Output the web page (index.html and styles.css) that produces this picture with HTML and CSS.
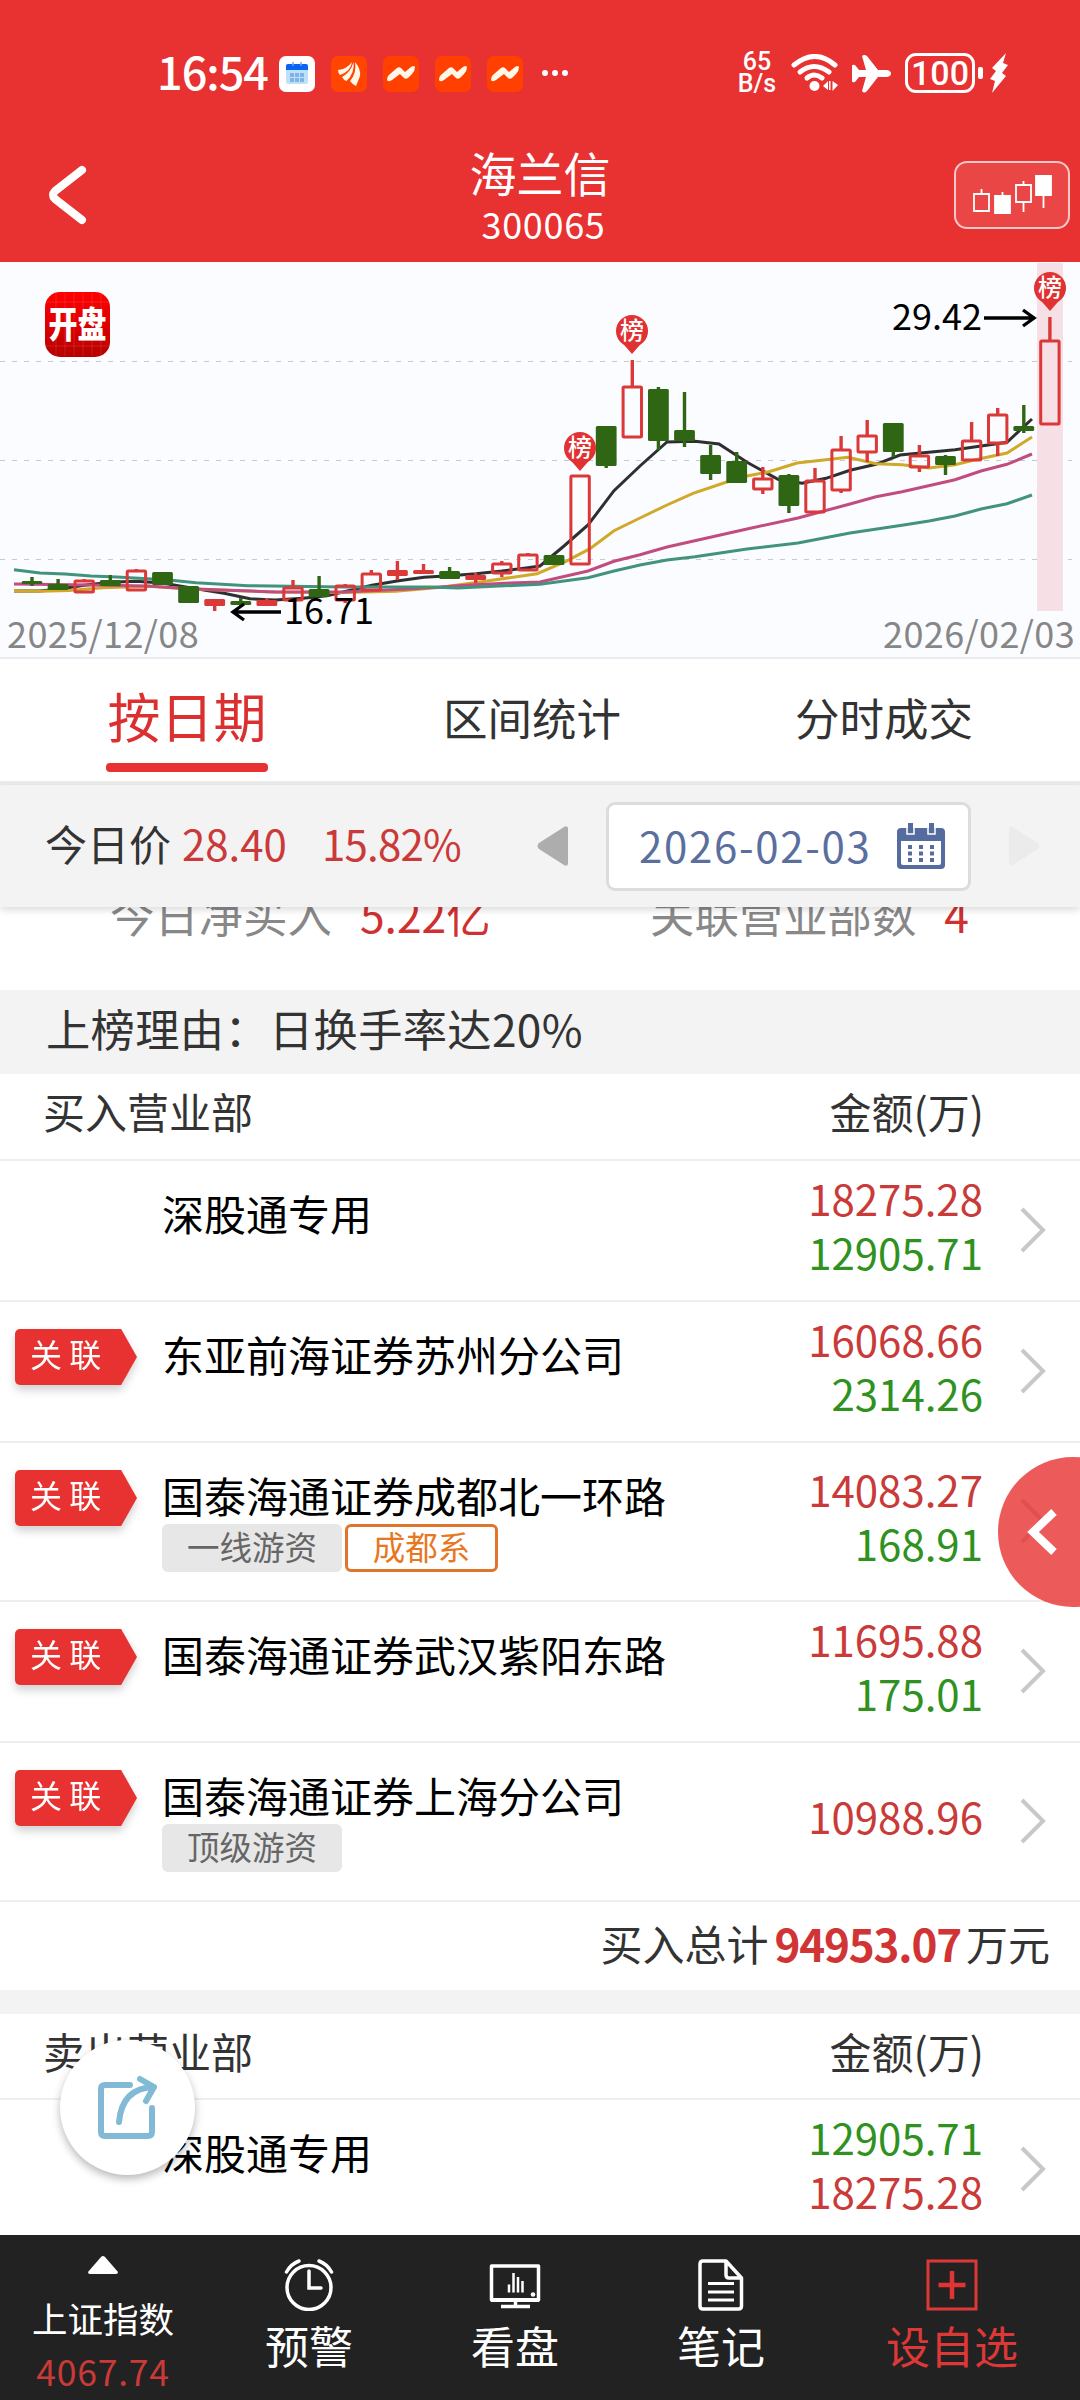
FILE: index.html
```html
<!DOCTYPE html>
<html lang="zh-CN">
<head>
<meta charset="UTF-8">
<meta name="viewport" content="width=device-width,initial-scale=1.0">
<title>海兰信 300065</title>
<link rel="stylesheet" href="styles.css">
</head>

<body>
<div class="page">

<!-- ====== 状态栏 ====== -->
<div class="status">
  <span class="time">16:54</span>
  <div class="apps">
    <svg viewBox="0 0 36 36"><rect width="36" height="36" rx="7" fill="#fff"/><rect x="7" y="8" width="22" height="20" rx="2" fill="#bfe0fb"/><path d="M7 14v-4q0-2 2-2h18q2 0 2 2v4z" fill="#0a62f0"/><path d="M14 6v4M22 6v4" stroke="#6aa5f5" stroke-width="1.5"/><path d="M11 17h4v4h-4zM16 17h4v4h-4zM21 17h4v4h-4zM11 22h4v4h-4zM16 22h4v4h-4zM21 22h4v4h-4z" fill="#7fb2e6"/></svg>
    <svg viewBox="0 0 36 36"><rect width="36" height="36" rx="7" fill="#ff4500"/><g fill="#fff8e8"><path d="M7 14q9-1 14-8-1 9-12 13-2-2-2-5z"/><path d="M11 21q9-5 11.500-15 1.500 11-7 19-3-1-4.500-4z"/><path d="M24 6q6 7 5 14l-4 10q-4-2-6-5 7-8 5-19z"/></g></svg>
    <svg viewBox="0 0 36 36"><rect width="36" height="36" rx="7" fill="#ff4000"/><path d="M4 23q0-3 3-5l7-6q3-2 5 1l3 3 6-5q3-2 4 0 0 4-3 7l-4 4q-3 2-5-1l-3-3-8 6q-5 3-5-1z" fill="#fff8e8"/></svg>
    <svg viewBox="0 0 36 36"><rect width="36" height="36" rx="7" fill="#ff4000"/><path d="M4 23q0-3 3-5l7-6q3-2 5 1l3 3 6-5q3-2 4 0 0 4-3 7l-4 4q-3 2-5-1l-3-3-8 6q-5 3-5-1z" fill="#fff8e8"/></svg>
    <svg viewBox="0 0 36 36"><rect width="36" height="36" rx="7" fill="#ff4000"/><path d="M4 23q0-3 3-5l7-6q3-2 5 1l3 3 6-5q3-2 4 0 0 4-3 7l-4 4q-3 2-5-1l-3-3-8 6q-5 3-5-1z" fill="#fff8e8"/></svg>
  </div>
  <svg class="dots" viewBox="0 0 28 8"><circle cx="4" cy="4" r="3"/><circle cx="14" cy="4" r="3"/><circle cx="24" cy="4" r="3"/></svg>
  <div class="speed"><span>65</span><span>B/s</span></div>
  <svg class="wifi" viewBox="0 0 48 38"><g fill="none" stroke="#fff" stroke-width="5" stroke-linecap="round"><path d="M3 11q21-17 41 0"/><path d="M9 18q14-11 29 0"/><path d="M16 24q7-6 15 0"/></g><circle cx="23.500" cy="32" r="5"/><path d="M32 32l5-5v9zM38 27h1.500v9H38zM41.500 27l5.500 4-5.500 6z"/></svg>
  <svg class="plane" viewBox="0 0 39 39"><path d="M10 2q2-2 5 0l11 14h9q4 1 4 3.500t-4 3.500h-9L15 37q-3 3-5 0l4-14H7l-4 5q-3 1-3-1V12q0-2 3-1l4 5h7z"/></svg>
  <div class="battery">100</div>
  <i class="nub"></i>
  <svg class="bolt" viewBox="0 0 18 40"><path d="M16 0L2 15l4 3-6 8 5 2-3 12 14-17-4-3 6-8-5-2z"/></svg>
</div>

<!-- ====== 标题栏 ====== -->
<header class="titlebar">
  <svg class="back" viewBox="0 0 40 60"><path d="M35 5L8 26q-4 4 0 8l27 21" fill="none" stroke="#fff" stroke-width="8" stroke-linecap="round"/></svg>
  <div class="stock"><h1>海兰信</h1><p>300065</p></div>
  <button class="kbtn">
    <svg viewBox="0 0 116 68"><g fill="none" stroke="#fff" stroke-width="1.800"><path d="M20 33h15v17H20zM27.500 28v5M41 35h15v17H41zM48.500 31v4M62 24h15v17H62zM69.500 20v4M69.500 41v10M82 15h15v19H82zM89.500 34v13"/></g><path d="M41 35h15v17H41zM82 15h15v19H82z" fill="#fff"/></svg>
  </button>
</header>

<!-- ====== K线 ====== -->
<section class="chart">
  <svg id="kline" viewBox="0 0 1080 397">
    <defs>
      <linearGradient id="logo" x1="0" y1="0" x2="0" y2="1"><stop offset="0" stop-color="#ff0000"/><stop offset=".4" stop-color="#e60000"/><stop offset="1" stop-color="#b50000"/></linearGradient>
      <g id="pin"><path d="M-14 7L0 23 14 7z" fill="#e03232"/><circle r="16" fill="#e03232"/></g>
    </defs>
    <path class="grid" d="M0 99.500H1072M0 198.500H1072M0 297.500H1072"/>
    <rect x="1037" y="1" width="26" height="348" fill="#f6dfe5"/>
    <rect x="45" y="30" width="65" height="65" rx="15" fill="url(#logo)"/>
    <path d="M56 31v63M65 31v63M74 31v63M83 31v63M92 31v63M101 31v63M46 40h63M46 84h63" stroke="#fff" stroke-opacity=".12"/>
    <text class="logo-text" transform="translate(77.500 75.500) scale(1 1.250)">开盘</text>
    <g id="ma"></g>
    <g id="candles"></g>
    <g id="pins"></g>
    <text class="price" x="284" y="362">16.71</text>
    <path class="arrow" d="M281 350H234M244 342L233 350l11 8"/>
    <text class="price" x="892" y="68">29.42</text>
    <path class="arrow" d="M984 56h48M1023 48l11 8-11 8"/>
    <text class="date" x="7" y="386">2025/12/08</text>
    <text class="date" x="883" y="386">2026/02/03</text>
  </svg>
</section>

<nav class="tabs">
  <a class="tab active">按日期</a>
  <a class="tab">区间统计</a>
  <a class="tab">分时成交</a>
</nav>

<div class="datebar">
  <span class="label">今日价</span>
  <span class="now">28.40</span>
  <span class="pct">15.82%</span>
  <svg class="prev" viewBox="0 0 31 40"><path d="M31 2v36q-1 3-4 1L2 23q-3-3 0-6L27 1q3-2 4 1z"/></svg>
  <div class="datebox">
    <span>2026-02-03</span>
    <svg viewBox="0 0 48 46"><path d="M4 5h40q4 0 4 4v33q0 4-4 4H4q-4 0-4-4V9q0-4 4-4z" fill="#566c9f"/><path d="M4 18h40v22q0 2-2 2H6q-2 0-2-2z" fill="#fff"/><path d="M10 1v10h7V1M31 1v10h7V1" fill="none" stroke="#fff" stroke-width="1.500"/><path d="M13.500 0v10M34.500 0v10" stroke="#566c9f" stroke-width="5"/><path d="M11 24h4M22 24h4M33 24h4M11 30.500h4M22 30.500h4M33 30.500h4M11 37h4M22 37h4M33 37h4" stroke="#566c9f" stroke-width="4"/></svg>
  </div>
  <svg class="next" viewBox="0 0 31 40"><path d="M0 2v36q1 3 4 1l25-16q3-3 0-6L4 1Q1-1 0 2z"/></svg>
</div>

<div class="summary">
  <div class="sum-l">今日净买入<b>5.22亿</b></div>
  <div class="sum-r">关联营业部数<b>4</b></div>
</div>

<div class="reason">上榜理由：日换手率达20%</div>

<!-- ====== 买入 ====== -->
<section class="list">
  <div class="head"><span>买入营业部</span><span>金额(万)</span></div>
  <div class="row">
    <div class="mark"></div>
    <div class="name">深股通专用</div>
    <div class="amt"><span class="up">18275.28</span><span class="down">12905.71</span></div>
    <svg class="go" viewBox="0 0 28 46"><path d="M3 2l21 21L3 44"/></svg>
  </div>
  <div class="row">
    <div class="mark"><span class="badge">关 联</span></div>
    <div class="name">东亚前海证券苏州分公司</div>
    <div class="amt"><span class="up">16068.66</span><span class="down">2314.26</span></div>
    <svg class="go" viewBox="0 0 28 46"><path d="M3 2l21 21L3 44"/></svg>
  </div>
  <div class="row">
    <div class="mark"><span class="badge">关 联</span></div>
    <div class="name">国泰海通证券成都北一环路
      <div class="tags"><span class="tag">一线游资</span><span class="tag orange">成都系</span></div>
    </div>
    <div class="amt"><span class="up">14083.27</span><span class="down">168.91</span></div>
    <svg class="go" viewBox="0 0 28 46"><path d="M3 2l21 21L3 44"/></svg>
  </div>
  <div class="row">
    <div class="mark"><span class="badge">关 联</span></div>
    <div class="name">国泰海通证券武汉紫阳东路</div>
    <div class="amt"><span class="up">11695.88</span><span class="down">175.01</span></div>
    <svg class="go" viewBox="0 0 28 46"><path d="M3 2l21 21L3 44"/></svg>
  </div>
  <div class="row">
    <div class="mark"><span class="badge">关 联</span></div>
    <div class="name">国泰海通证券上海分公司
      <div class="tags"><span class="tag">顶级游资</span></div>
    </div>
    <div class="amt"><span class="up">10988.96</span></div>
    <svg class="go" viewBox="0 0 28 46"><path d="M3 2l21 21L3 44"/></svg>
  </div>
  <div class="total">买入总计<b>94953.07</b>万元</div>
</section>

<!-- ====== 卖出 ====== -->
<section class="list sell">
  <div class="head"><span>卖出营业部</span><span>金额(万)</span></div>
  <div class="row">
    <div class="mark"></div>
    <div class="name">深股通专用</div>
    <div class="amt"><span class="down">12905.71</span><span class="up">18275.28</span></div>
    <svg class="go" viewBox="0 0 28 46"><path d="M3 2l21 21L3 44"/></svg>
  </div>
</section>

<!-- ====== 底部导航 ====== -->
<footer class="bottom">
  <div class="index">
    <svg viewBox="0 0 30 18"><path d="M13 1q2-2 4 0l13 15q0 2-2 2H2q-2 0-2-2z" fill="#fff"/></svg>
    <span>上证指数</span>
    <em>4067.74</em>
  </div>
  <div class="item">
    <svg viewBox="0 0 52 52"><g fill="none" stroke="#fff" stroke-width="3.500"><circle cx="26" cy="28.500" r="22"/><path d="M26 12v17h12" stroke-linecap="round"/><path d="M3.500 13Q8 5 16 2M48.500 13Q44 5 36 2" stroke-linecap="round"/></g></svg>
    <span>预警</span>
  </div>
  <div class="item">
    <svg viewBox="0 0 52 52"><g fill="none" stroke="#fff" stroke-width="3.500"><path d="M2.500 7h47v34h-47zM12 47.500h29M26.500 41v6" stroke-linejoin="round"/><path d="M20 33.500v-8M24.500 33.500V14M29 33.500V18M33.500 33.500V22" stroke-width="2.500"/></g><path d="M2 39h48v4H2z" fill="#fff"/><circle cx="44" cy="35.500" r="2.300" fill="#fff"/></svg>
    <span>看盘</span>
  </div>
  <div class="item">
    <svg viewBox="0 0 52 52"><g fill="none" stroke="#fff" stroke-width="3.500" stroke-linejoin="round"><path d="M8 2h23l15.500 17v28q0 3-3 3H8q-3 0-3-3V5q0-3 3-3zM31 2v14q0 3 3 3h12"/><path d="M13 24.500h26M13 33h26M13 41h26" stroke-width="2.800"/></g></svg>
    <span>笔记</span>
  </div>
  <div class="item add">
    <svg viewBox="0 0 52 52"><path d="M2 2h48v48H2z" fill="none" stroke="#dc3838" stroke-width="3"/><path d="M26 12v28M12.500 26h27" stroke="#e03434" stroke-width="4.500"/></svg>
    <span>设自选</span>
  </div>
</footer>

<!-- 悬浮按钮 -->
<div class="drawer"><svg viewBox="0 0 30 46"><path d="M27 3L6 23l21 20" fill="none" stroke="#fff" stroke-width="8"/></svg></div>
<div class="share"><svg viewBox="0 0 62 66"><g fill="none" stroke="#82b9d5" stroke-width="6" stroke-linecap="round" stroke-linejoin="round"><path d="M33 11H8q-4 0-4 4v43q0 4 4 4h43q4 0 4-4V34"/><path d="M22 48q3-34 35-35M43 5l14 8-8 14"/></g></svg></div>

</div>

<script>
const NS="http://www.w3.org/2000/svg";
function add(parent,tag,attrs){
  const el=document.createElementNS(NS,tag);
  for(const k in attrs) el.setAttribute(k,attrs[k]);
  document.getElementById(parent).appendChild(el);
  return el;
}

/* 均线 */
const lines=[
 ["#2f2f30","14,329 40,329 62,326.700 84,323.300 110,320.300 136,319.300 162,321 196,326.700 224,331.300 250,336.700 275,338 303,336.300 327,333.700 372,323.300 397,319 424,315.300 450,313.700 476,311.700 502,309 528,305.700 540,304 564,284 588,263 614,228.700 640,204 667,180 695,179.300 719,182 747,200.300 778,217.300 802,221.300 826,216.300 850,208.300 876,202.300 900,193 955,187.700 1007,180.300 1032,157"],
 ["#d0a928","14,329 40,329.300 69,328.500 103,325.700 148,324.300 189,327 275,330 344,330.600 396,329.300 441,325.300 482,319.700 537,311.700 566,299.300 590,286.700 614,268.700 640,256 667,243 693,231.300 726,220.300 747,214 769,209.700 797,201 848,195.300 876,201.700 902,202.700 929,206 955,202.700 974,198 1007,191 1032,175"],
 ["#c14c80","14,322 91,323 148,324 189,326.700 275,330 344,330 413,326.700 470,323 510,321 540,320 588,309 614,299.300 640,292.700 667,285 747,267 798,256 850,242 876,234.700 902,229.700 955,217.700 981,209 1007,202.300 1032,192"],
 ["#42937c","14,307.700 40,311 65,312 91,314 117,315 169,318 196,320.700 248,323.700 344,325 430,325 458,326 499,324 540,322.300 588,315.700 614,309 640,303 667,298 695,294.700 747,287 798,281 850,271 902,263.300 929,259 955,254 981,247 1007,241.700 1032,233"],
];
lines.forEach(l=>add("ma","polyline",{points:l[1],stroke:l[0],fill:"none","stroke-width":3}));

/* [类型, 最高, 实体上, 实体下, 最低]  r=阳线 s=小阳线 g=阴线 */
const data=[
 ["g",315,319,322,324],["g",317,322,328,328],["r",317,319,330,331],["g",313,318,324,324],["r",307,309,328,329],
 ["g",310,310,323,323],["g",324,324,341,341],["s",337,337,344,349],["g",336,339,343,344],["s",336,338,344,344],
 ["r",318,326,338,338],["g",314,327,335,335],["r",322,324,338,341],["r",308,312,328,328],["s",299,308,314,318],
 ["s",302,308,312,312],["g",305,309,317,317],["s",311,313,318,321],["r",299,302,311,315],["r",291,293,308,308],
 ["g",293,293,303,303],["r",214,214,302,302],["g",164,164,204,206],["r",98,125,175,175],["g",125,127,179,188],
 ["g",130,168,179,185],["g",183,193,212,218],["g",190,199,221,221],["r",205,217,227,232],["g",212,213,244,251],
 ["r",206,219,250,250],["r",174,188,228,231],["r",158,174,190,200],["g",161,161,190,195],["r",183,194,205,210],
 ["g",193,194,203,213],["r",160,179,198,198],["r",146,153,181,194],["g",143,164,169,171],["r",55,79,162,162],
];
data.forEach((d,i)=>{
  const [t,hi,top,bot,lo]=d, x=32+26.1*i, c=t==="g"?"#2f6614":"#db3838";
  if(hi<top) add("candles","path",{d:`M${x} ${hi}V${top}`,stroke:c,"stroke-width":3.4});
  if(lo>bot) add("candles","path",{d:`M${x} ${bot}V${lo}`,stroke:c,"stroke-width":3.4});
  if(t==="r") add("candles","rect",{x:x-9.2,y:top,width:18.4,height:bot-top,rx:1,fill:"none",stroke:c,"stroke-width":3});
  else add("candles","rect",{x:x-10.4,y:top,width:20.8,height:bot-top,rx:1.5,fill:c});
});

/* 龙虎榜标记 */
[[580,186],[632,69],[1050,26]].forEach(p=>{
  add("pins","use",{href:"#pin",x:p[0],y:p[1]});
  add("pins","text",{x:p[0],y:p[1]+8,class:"pin-text"}).textContent="榜";
});
</script>
</body>
</html>
```

FILE: styles.css
```css
:root{
  --red:#e83131;
  --up:#c93a38;
  --down:#2f9220;
  --gray:#f3f3f3;
  --text:#333;
}
*{box-sizing:border-box;}
html,body{margin:0;background:#fff;}
body{font-family:"Noto Sans CJK SC",sans-serif;color:var(--text);}
h1,p{margin:0;font-weight:400;}
svg{display:block;flex:none;}
.page{position:relative;width:1080px;height:2400px;overflow:hidden;display:flex;flex-direction:column;}
.page>*{flex:none;}

/* 状态栏 */
.status{height:146px;background:var(--red);color:#fff;display:flex;align-items:center;padding-left:157px;}
.status svg{fill:#fff;}
.time{width:122px;font-size:45px;font-weight:500;line-height:60px;letter-spacing:-1px;margin-top:-4px;white-space:nowrap;}
.apps{display:flex;gap:16px;margin-top:2px;}
.apps svg{width:36px;height:36px;}
.dots{width:28px;height:8px;margin-left:18px;}
.speed{width:48px;margin-left:164px;display:flex;flex-direction:column;align-items:center;font-size:25px;line-height:22px;font-weight:500;margin-top:-1px;}
.speed span{font-family:Roboto,sans-serif;}
.wifi{width:48px;height:38px;margin-left:10px;}
.plane{width:39px;height:39px;margin-left:13px;}
.battery{
  width:70px;height:40px;margin-left:14px;border:3px solid #fff;border-radius:11px;
  font:500 34px/35px Roboto,sans-serif;text-align:center;
}
.nub{width:5px;height:12px;margin-left:3px;background:#fff;border-radius:2px;}
.bolt{width:18px;height:40px;margin-left:7px;}

/* 标题栏 */
.titlebar{height:116px;background:var(--red);color:#fff;display:grid;grid-template-columns:1fr auto 1fr;align-items:center;padding:0 10px 0 47px;}
.back{width:40px;height:60px;margin-top:-18px;}
.stock{text-align:center;margin:-20px 37px 0 0;}
.stock h1{font-size:47px;line-height:56px;}
.stock p{font-size:36px;line-height:44px;letter-spacing:.7px;margin-top:1px;padding-left:7px;}
.kbtn{justify-self:end;width:116px;height:68px;margin-top:-18px;padding:0;border:2px solid rgba(255,255,255,.7);border-radius:13px;background:rgba(255,255,255,.1);}
.kbtn svg{margin:-2px;width:116px;height:68px;}

/* K线 */
.chart{height:397px;background:#fbfcff;border-bottom:2px solid #ececf0;}
.chart svg{width:1080px;height:397px;}
.grid{stroke:#c6c9cf;stroke-width:1;stroke-dasharray:5 7;fill:none;}
.logo-text{font-size:29px;font-weight:900;fill:#fff;text-anchor:middle;}
.price{font-size:36px;fill:#000;}
.date{font-size:36px;fill:#868686;letter-spacing:.4px;}
.arrow{fill:none;stroke:#000;stroke-width:3.400;}
.pin-text{font-size:24px;font-weight:500;fill:#fff;text-anchor:middle;}

/* 标签页 */
.tabs{height:126px;border-bottom:4px solid #ececec;display:flex;align-items:flex-start;padding-top:14px;}
.tab{width:178px;margin-left:175px;font-size:44.500px;line-height:88px;white-space:nowrap;}
.tab.active{
  width:162px;margin-left:106px;text-align:center;font-size:53px;line-height:84px;color:#dc3030;
}
.tab.active::after{content:'';display:block;height:9px;margin-top:6px;border-radius:4px;background:var(--red);}
.tab:last-child{margin-left:174px;}

.datebar{
  position:relative;z-index:2;height:122px;background:var(--gray);box-shadow:0 3px 7px rgba(0,0,0,.14);
  display:flex;align-items:center;font-size:42px;
}
.label{width:137px;margin-left:45px;margin-top:-7px;}
.now,.pct{color:var(--up);margin-top:-7px;}
.now{width:140px;}
.pct{width:215px;letter-spacing:-.8px;}
.prev,.next{width:31px;height:40px;}
.prev{fill:#adadad;}
.next{fill:#ebebeb;margin-left:38px;}
.datebox{
  width:365px;height:89px;margin-left:38px;padding:0 23px 0 30px;display:flex;align-items:center;justify-content:space-between;
  background:#fff;border:3px solid #dcdcdc;border-radius:9px;color:#5b6f9f;letter-spacing:1.700px;white-space:nowrap;
}
.datebox span{margin-top:-4px;}
.datebox svg{width:48px;height:46px;}

.summary{height:83px;display:flex;font-size:44.400px;line-height:64px;color:#888;padding-left:110px;}
.summary div{margin-top:-25px;}
.summary b{font-weight:400;color:#cf3030;margin-left:28px;}
.sum-l{width:540px;}

.reason{height:84px;background:var(--gray);padding-left:46px;font-size:44.300px;line-height:76px;letter-spacing:.3px;}

/* 营业部列表 */
.head{height:87px;border-bottom:2px solid #eee;display:flex;justify-content:space-between;padding:0 96px 0 43px;font-size:42px;line-height:73px;}
.row{height:141px;border-bottom:2px solid #eee;display:flex;}
.row:has(.tags){height:159px;}
.mark{width:162px;padding:27px 0 0 15px;}
.badge{
  display:block;width:122px;height:56px;padding-left:15px;font-size:32px;line-height:48px;color:#fff;
  background:var(--red);border-radius:5px;clip-path:polygon(0 0,87% 0,100% 50%,87% 100%,0 100%);white-space:nowrap;
}
.mark:has(.badge){filter:drop-shadow(0 5px 4px rgba(0,0,0,.18));}
.name{flex:1;padding-top:25px;font-size:42px;line-height:54px;color:#000;}
.tags{display:flex;gap:3px;margin-top:2px;}
.tag{width:180px;height:48px;background:#e7e7e7;border-radius:6px;font-size:32.500px;line-height:44px;text-align:center;color:#666;}
.tag.orange{width:153px;border:3px solid #df762c;background:#fff;color:#e87722;line-height:38px;}
.amt{display:flex;flex-direction:column;justify-content:center;padding-bottom:11px;text-align:right;font-size:42px;line-height:54px;margin-right:-1px;}
.up{color:var(--up);}
.down{color:var(--down);}
.go{width:28px;height:46px;align-self:center;margin:-2px 33px 0 37px;fill:none;stroke:#c8c8c8;stroke-width:4;}
.total{height:88px;display:flex;justify-content:flex-end;padding-right:30px;font-size:42px;line-height:82px;}
.total b{color:#d13434;font-size:44px;margin:0 5px 0 6px;letter-spacing:-1.200px;}
.sell{border-top:24px solid var(--gray);height:245px;overflow:hidden;}
.sell .head{height:86px;}

/* 底部导航 */
.bottom{height:165px;background:#222;color:#fff;display:flex;}
.index{width:206px;display:flex;flex-direction:column;align-items:center;padding-top:21px;}
.index svg{width:30px;height:18px;}
.index span{font-size:35.500px;line-height:50px;margin-top:19px;}
.index em{font-style:normal;font-size:35.500px;line-height:50px;margin-top:3px;color:var(--up);letter-spacing:.8px;}
.item{width:206px;display:flex;flex-direction:column;align-items:center;padding-top:24px;font-size:44px;}
.item svg{width:52px;height:52px;}
.item span{line-height:60px;margin-top:4px;}
.item.add{width:256px;color:#dc3838;}

/* 悬浮 */
.drawer{position:absolute;z-index:3;left:998px;top:1457px;width:150px;height:150px;border-radius:50%;background:rgba(232,49,49,.8);}
.drawer svg{width:30px;height:46px;margin:52px 0 0 29px;}
.share{position:absolute;z-index:3;left:60px;top:2040px;width:135px;height:135px;border-radius:50%;background:#fff;box-shadow:0 4px 8px rgba(0,0,0,.28);}
.share svg{width:62px;height:66px;margin:34px 0 0 37px;}
```
